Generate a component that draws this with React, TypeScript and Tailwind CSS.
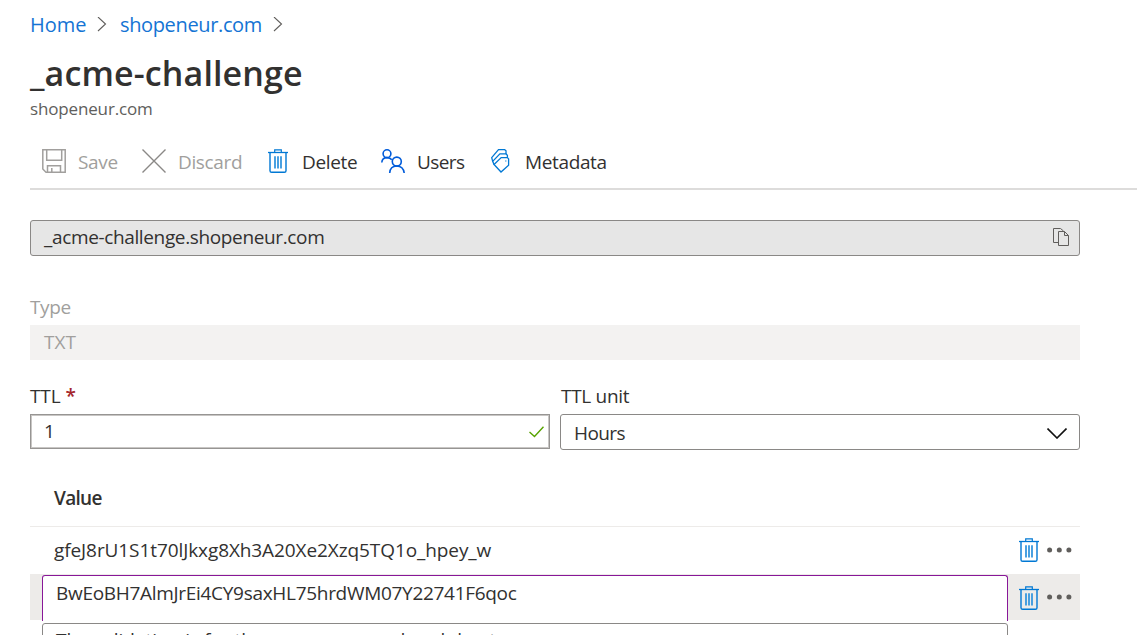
import React from "react";

function Chevron({ className = "" }: { className?: string }) {
  return (
    <svg className={className} width="10" height="16" viewBox="0 0 10 16" fill="none" stroke="#605e5c" strokeWidth="1.1">
      <path d="M1 0l7.500 7L1 14" />
    </svg>
  );
}

function Trash({ className = "" }: { className?: string }) {
  return (
    <svg className={className} width="20" height="24" viewBox="0 0 20 24" fill="none" stroke="#0078d4">
      <path d="M0 3.500h20" strokeWidth="1.3" />
      <path d="M6.700 3.500V0.900h6.600v2.600" strokeWidth="1.2" />
      <path d="M2 3.500v18.200q0 1.600 1.600 1.600h12.800q1.600 0 1.600-1.600V3.500" strokeWidth="1.4" />
      <path d="M7 7.300v12.200M10 7.300v12.200M13 7.300v12.200" strokeWidth="1.8" stroke="#3797de" />
    </svg>
  );
}

function Dots() {
  return (
    <svg width="26" height="6" viewBox="0 0 26 6" fill="#605e5c">
      <circle cx="2.600" cy="3" r="2.500" />
      <circle cx="12.300" cy="3" r="2.500" />
      <circle cx="21.900" cy="3" r="2.500" />
    </svg>
  );
}

function SaveIcon() {
  return (
    <svg width="24" height="24" viewBox="0 0 24 24" fill="none" stroke="#a19f9d" strokeWidth="1.5">
      <path d="M0.800 0.800h22.400v22.400H4L0.800 20z" />
      <path d="M4.700 0.800v10.400h15V0.800" />
      <path d="M5.500 23v-6.200h13V23M9.800 23v-4" />
    </svg>
  );
}

function UsersIcon() {
  return (
    <svg width="24" height="24" viewBox="0 0 24 24" fill="none" stroke="#015cda" strokeWidth="1.6">
      <circle cx="6" cy="4.700" r="3.900" />
      <circle cx="15.800" cy="12.600" r="4.500" />
      <path d="M0.800 13.500C1 10.300 3 8.600 6 8.600c2 0 3.800.8 4.800 2.200" />
      <path d="M8.700 24c.3-4.400 3-7 7-7s6.900 2.600 7.500 7" />
    </svg>
  );
}

function TagsIcon() {
  return (
    <svg width="19" height="24" viewBox="0 0 19 24" fill="none" stroke="#0078d4" strokeWidth="1.3">
      <path d="M4 16.500L10 23l7.600-6.800V9.900L16.400 8.600H10.200L3 15.500z" />
      <path d="M3 15.500L1.700 12.300 8.900 4.900h6.100l1.400 1.300v2.400" />
      <path d="M1.700 12.300L.7 8.700 7.500.7h6.200l1.300 1v3.200" />
      <path d="M14.200 12h1.200" strokeWidth="1.200" />
    </svg>
  );
}

export default function App() {
  return (
    <div className="flex h-[635px] w-[1137px] flex-col overflow-hidden bg-white pl-[30px] font-['Open_Sans','Noto_Sans',sans-serif] text-[19px] leading-[26px] tracking-[-0.36px] text-[#323130]">
      <nav className="mt-3 flex h-[26px] shrink-0 items-center text-[20px] text-[#1474d4]">
        <a className="w-[67px] tracking-[-0.05px]">Home</a>
        <Chevron className="mr-[13px]" />
        <a className="w-[153px]">shopeneur.com</a>
        <Chevron />
      </nav>
      <h1 className="mt-[13px] h-[44px] shrink-0 text-[34px] font-semibold leading-[44px] tracking-[0.13px]">_acme-challenge</h1>
      <div className="mt-px h-[26px] shrink-0 text-[17px] tracking-[-0.15px] text-[#605e5c]">shopeneur.com</div>
      <div className="mt-3 flex h-[56px] shrink-0 items-center border-b-2 border-[#dddcdb] pl-3">
        <div className="flex w-[100px] items-center gap-3 text-[#a19f9d]">
          <SaveIcon />
          <span className="pt-[2px]">Save</span>
        </div>
        <div className="flex w-[126px] items-center gap-3 text-[#a19f9d]">
          <svg width="24" height="24" viewBox="0 0 24 24" fill="none" stroke="#8a8886" strokeWidth="1.4">
            <path d="M.5.5l23 23M23.500.5L.5 23.500" />
          </svg>
          <span className="pt-[2px]">Discard</span>
        </div>
        <div className="flex w-[113px] items-center gap-[14px]">
          <Trash />
          <span className="pt-[2px]">Delete</span>
        </div>
        <div className="flex w-[110px] items-center gap-3">
          <UsersIcon />
          <span className="pt-[2px] tracking-[-0.6px]">Users</span>
        </div>
        <div className="flex items-center gap-[15px]">
          <TagsIcon />
          <span className="pt-[2px]">Metadata</span>
        </div>
      </div>

      <main className="flex w-[1050px] shrink-0 flex-col">
        <div className="mt-[30px] flex h-9 items-center justify-between rounded-[3px] border border-[#8a8886] bg-[#e6e6e6] pl-[13px] pr-[10px]">
          <span className="pb-[2px]">_acme-challenge.shopeneur.com</span>
          <svg className="mb-[2px]" width="16" height="18" viewBox="0 0 16 18" fill="none" stroke="#605e5c">
            <path d="M5.500 14.500H.5V.5h7l3 2.500" />
            <path d="M5.500 3.500h6l4 4v10h-10zM11.500 3.500v4h4" />
          </svg>
        </div>
        <label className="mt-[38px] h-[26px] text-[#a19f9d]">Type</label>
        <div className="mt-[5px] flex h-[35px] items-center bg-[#f3f2f1] pb-[2px] pl-[14px] tracking-[0px] text-[#a19f9d]">TXT</div>
        <div className="mt-[23px] grid grid-cols-2 gap-[10px]">
          <div>
            <div className="h-[26px] tracking-[-0.1px]">
              TTL <span className="font-semibold text-[#a4262c]">*</span>
            </div>
            <div className="mt-[5px] flex h-[35px] items-center justify-between border border-[#979593] pl-[13px] pr-[5px] shadow-[inset_0_0_0_1px_#c8c6c4]">
              <span className="pb-[2px]">1</span>
              <svg className="mt-px" width="15" height="12" viewBox="0 0 15 12" fill="none" stroke="#57a300" strokeWidth="1.4">
                <path d="M.5 6l5 4.500L14.500.8" />
              </svg>
            </div>
          </div>
          <div>
            <div className="h-[26px] pl-px tracking-[-0.3px]">TTL unit</div>
            <div className="mt-[5px] flex h-9 items-center justify-between rounded-[3px] border border-[#8a8886] pl-[13px] pr-3">
              <span className="pt-px tracking-[-0.6px]">Hours</span>
              <svg className="mt-[2px]" width="20" height="11" viewBox="0 0 20 11" fill="none" stroke="#111" strokeWidth="1.6">
                <path d="M.5.5L10 10 19.500.5" />
              </svg>
            </div>
          </div>
        </div>
        <div className="mt-[35px] h-[42px] border-b border-[#edebe9] pl-6 font-semibold tracking-[-0.7px]">Value</div>
        <div className="flex h-[47px] items-center pb-[2px] pl-6 pr-[7px]">
          <span className="flex-1 tracking-[-0.09px]">gfeJ8rU1S1t70lJkxg8Xh3A20Xe2Xzq5TQ1o_hpey_w</span>
          <Trash className="mr-[8px]" />
          <Dots />
        </div>
        <div className="flex h-[46px] items-center bg-[#edebe9] pl-3 pr-[7px]">
          <div className="mr-[11px] mt-px h-[46px] w-[966px] self-start rounded-t-[3px] border border-b-0 border-[#881798] bg-white pl-[13px] pt-[4px] tracking-[-0.3px]">
            BwEoBH7AlmJrEi4CY9saxHL75hrdWM07Y22741F6qoc
          </div>
          <Trash className="mr-[8px] mt-px" />
          <Dots />
        </div>
        <div className="ml-3 mt-[3px] h-[40px] w-[966px] rounded-t-[3px] border border-[#8a8886] pl-[13px] pt-[3px] tracking-[0px]">
          The validation is for the zone name and each host
        </div>
      </main>
    </div>
  );
}
